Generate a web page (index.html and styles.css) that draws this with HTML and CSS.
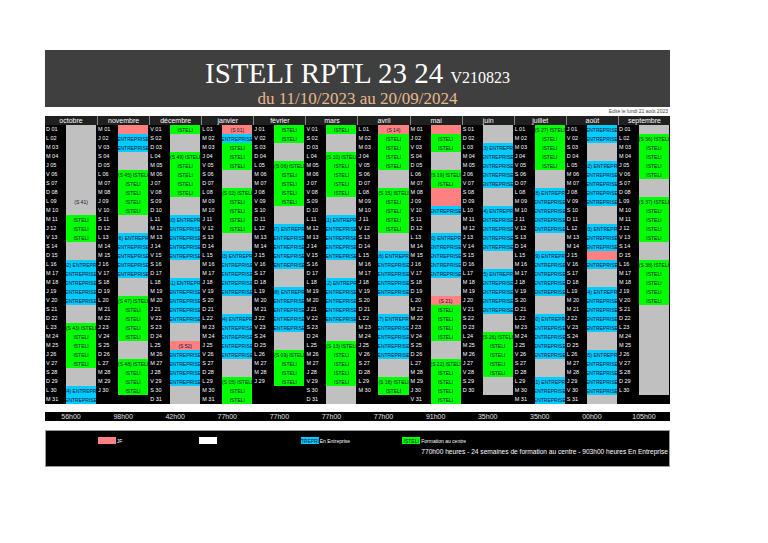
FILE: index.html
```html
<!DOCTYPE html>
<html lang="fr">
<head>
<meta charset="utf-8">
<title>ISTELI RPTL 23 24</title>
<link rel="stylesheet" href="styles.css">
</head>
<body>
<div class="page">
  <header class="banner">
    <div class="title">ISTELI RPTL 23 24 <span class="ver">V210823</span></div>
    <div class="subtitle">du 11/10/2023 au 20/09/2024</div>
  </header>
  <div class="edited">Edité le lundi 21 août 2023</div>
  <div class="calendar" id="cal"></div>
  <div class="totals" id="tot"></div>
  <div class="legend">
    <div class="legend-row">
      <div class="litem li-2"><span class="sw p"></span><span class="ltxt">JF</span></div>
      <div class="litem li-4"><span class="sw w"></span></div>
      <div class="litem li-6"><span class="sw e"><span>ENTREPRISE</span></span><span class="ltxt">En Entreprise</span></div>
      <div class="litem li-8"><span class="sw i"><span>ISTELI</span></span><span class="ltxt">Formation au centre</span></div>
    </div>
    <div class="summary">770h00 heures - 24 semaines de formation au centre - 903h00 heures En Entreprise</div>
  </div>
</div>
<script src="script.js"></script>
</body>
</html>
```

FILE: styles.css
```css
* { box-sizing: border-box; }
body { margin: 0; background: #fff; font-family: "Liberation Sans", Arial, sans-serif; }
.page { width: 625px; margin: 50px 0 0 45px; }

.banner { height: 57px; background: #3f3f3f; text-align: center; font-family: "Liberation Serif", "Times New Roman", serif; color: #fff; padding-top: 9px; }
.title { font-size: 29px; line-height: 29px; white-space: nowrap; }
.ver { font-size: 16px; line-height: 1; }
.subtitle { font-size: 17px; line-height: 17px; color: #e8b98c; margin-top: 2px; }

.edited { height: 9px; font-size: 5px; line-height: 9px; text-align: right; color: #444; padding-right: 2px; }

.calendar { display: grid; grid-template-columns: repeat(12, 1fr); background: #000; }
.month { display: flex; flex-direction: column; min-width: 0; }
.mhead { height: 9px; line-height: 9px; font-size: 7px; color: #fff; text-align: center; background: #202020; border-left: 1px solid #8a8a8a; }
.month:first-child .mhead { border-left: 0; }
.day { display: flex; height: 9px; }
.lbl { width: 21px; flex: none; color: #fff; font-size: 5.5px; line-height: 9px; padding-left: 1px; white-space: nowrap; overflow: hidden; }
.cell { flex: 1; min-width: 0; margin-right: 1px; display: flex; justify-content: center; align-items: center; overflow: hidden; white-space: nowrap; font-size: 5px; color: #111133; }
.cell > span, .sw > span { flex: none; }

.g { background: #c0c0c0; }
.p { background: #ff8080; }
.e { background: #00ccff; }
.i { background: #00ff00; }
.x { background: #000; }
.w { background: #fff; }

.totals { display: grid; grid-template-columns: repeat(12, 1fr); background: #000; height: 9px; margin-top: 8px; }
.tot { text-align: center; color: #e0e0e0; font-size: 7px; line-height: 9px; }

.legend { margin-top: 9px; height: 37px; background: #000; border: 1px solid #9a9a9a; padding-top: 6px; }
.legend-row { display: grid; grid-template-columns: repeat(12, 1fr); height: 7px; }
.litem { display: flex; align-items: center; white-space: nowrap; padding-left: 1px; }
.li-2 { grid-column: 2; }
.li-4 { grid-column: 4; }
.li-6 { grid-column: 6; }
.li-8 { grid-column: 8; }
.sw { width: 18px; height: 7px; flex: none; display: flex; justify-content: center; align-items: center; overflow: hidden; font-size: 5px; color: #111133; }
.ltxt { color: #fff; font-size: 5px; padding-left: 1px; }
.summary { text-align: right; color: #fff; font-size: 6.6px; line-height: 9px; margin-top: 3px; padding-right: 1px; white-space: nowrap; }
```

FILE: script.js
```js
(function () {
  var M = [
    ['octobre', 2023, 9, 'g10 i3 g2 e5 g2 i5 g2 e2', {9: '41', 16: '42', 23: '43', 30: '44'}, '56h00'],
    ['novembre', 2023, 10, 'p1 e2 g2 i5 g2 e5 g2 i5 g2 i4 x1', {6: '45', 13: '46', 20: '47', 27: '48'}, '98h00'],
    ['décembre', 2023, 11, 'i1 g2 i5 g2 e5 g2 e5 g2 p1 e4 g2', {4: '49', 11: '50', 18: '51', 25: '52'}, '42h00'],
    ['janvier', 2024, 0, 'p1 e1 i3 g2 i5 g2 e5 g2 e5 g2 i3', {1: '01', 8: '02', 15: '03', 22: '04', 29: '05'}, '77h00'],
    ['février', 2024, 1, 'i2 g2 i5 g2 e5 g2 e5 g2 i4 x2', {5: '06', 12: '07', 19: '08', 26: '09'}, '77h00'],
    ['mars', 2024, 2, 'i1 g2 i5 g2 e5 g2 e5 g2 i5 g2', {4: '10', 11: '11', 18: '12', 25: '13'}, '77h00'],
    ['avril', 2024, 3, 'p1 i4 g2 i5 g2 e5 g2 e5 g2 i2 x1', {1: '14', 8: '15', 15: '16', 22: '17', 29: '18'}, '77h00'],
    ['mai', 2024, 4, 'p1 i2 g2 i2 p2 e1 g2 e5 g2 p1 i4 g2 i5', {6: '19', 13: '20', 20: '21', 27: '22'}, '91h00'],
    ['juin', 2024, 5, 'g2 e5 g2 e5 g2 e5 g2 i5 g2 x1', {3: '23', 10: '24', 17: '25', 24: '26'}, '35h00'],
    ['juillet', 2024, 6, 'i5 g2 e5 g2 e5 g2 e5 g2 e3', {1: '27', 8: '28', 15: '29', 22: '30', 29: '31'}, '35h00'],
    ['août', 2024, 7, 'e2 g2 e5 g2 e3 p1 e1 g2 e5 g2 e5 g1', {5: '32', 12: '33', 19: '34', 26: '35'}, '00h00'],
    ['septembre', 2024, 8, 'g1 i5 g2 i5 g2 i5 g10 x1', {2: '36', 9: '37', 16: '38'}, '105h00']
  ];
  var DAYS = ['D', 'L', 'M', 'M', 'J', 'V', 'S'];
  var TXT = {e: 'ENTREPRISE', i: 'ISTELI', p: '', g: '', x: ''};
  var cal = document.getElementById('cal');
  var tot = document.getElementById('tot');

  M.forEach(function (mo) {
    var col = document.createElement('div');
    col.className = 'month';
    var h = document.createElement('div');
    h.className = 'mhead';
    h.textContent = mo[0];
    col.appendChild(h);

    var codes = [];
    mo[3].split(' ').forEach(function (r) {
      var c = r.charAt(0), n = parseInt(r.slice(1), 10);
      for (var k = 0; k < n; k++) codes.push(c);
    });

    codes.forEach(function (c, idx) {
      var d = idx + 1;
      var row = document.createElement('div');
      row.className = 'day';
      var l = document.createElement('span');
      l.className = 'lbl';
      if (c !== 'x') {
        var wd = new Date(mo[1], mo[2], d).getDay();
        l.textContent = DAYS[wd] + ' ' + (d < 10 ? '0' : '') + d;
      }
      var cell = document.createElement('span');
      cell.className = 'cell ' + c;
      var t = TXT[c];
      var w = mo[4][d];
      if (w) t = '(S ' + w + ')' + (t ? ' ' + t : '');
      if (t) {
        var s = document.createElement('span');
        s.textContent = t;
        cell.appendChild(s);
      }
      row.appendChild(l);
      row.appendChild(cell);
      col.appendChild(row);
    });
    cal.appendChild(col);

    var td = document.createElement('div');
    td.className = 'tot';
    td.textContent = mo[5];
    tot.appendChild(td);
  });
})();
```
